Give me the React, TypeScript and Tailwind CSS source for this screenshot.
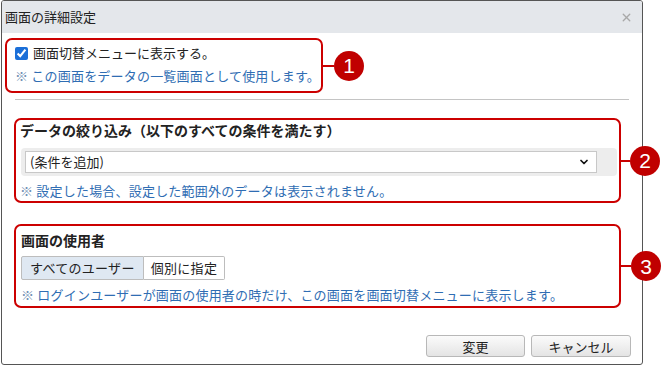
import React from 'react';
import { ChevronDown, X } from 'lucide-react';

const Marker: React.FC<{ n: number; line: number }> = ({ n, line }) => (
  <div className="absolute left-full top-1/2 -translate-y-1/2 flex items-center z-10">
    <div className="h-[2px] bg-[#c80000]" style={{ width: line }} />
    <div className="w-[30px] h-[30px] rounded-full bg-[#c00000] flex items-center justify-center text-white text-[21px] leading-none font-['Liberation_Sans',sans-serif]">
      {n}
    </div>
  </div>
);

const Note: React.FC<{ children: React.ReactNode }> = ({ children }) => (
  <p className="text-[13px] leading-[18px] tracking-[0.2px] text-[#2f6db3] whitespace-nowrap">
    <span className="text-[#6f8fb3]">※</span> {children}
  </p>
);

export default function App() {
  return (
    <div className="w-[670px] h-[367px] bg-white font-['Noto_Sans_CJK_JP',sans-serif] text-[#222]">
      <div className="ml-[1px] w-[642px] h-[365px] border border-[#555] rounded-[3px] bg-white flex flex-col">
        {/* title bar */}
        <div className="h-[32px] bg-[#e4e7eb] flex items-center justify-between pl-[3px] pr-[9px] rounded-t-[2px]">
          <span className="text-[13px] leading-[18px]">画面の詳細設定</span>
          <X size={13} strokeWidth={2.5} className="text-[#a8a8a8]" />
        </div>

        {/* 1 */}
        <div className="relative ml-[3px] mt-[5px] w-[318px] h-[55px] border-2 border-[#cc0000] rounded-[7px] pl-[8px] pt-[3px]">
          <label className="flex items-center h-[20px] gap-[5px] text-[13px] whitespace-nowrap">
            <input type="checkbox" checked readOnly className="w-[13px] h-[13px] m-0 accent-[#1b6fd8]" />
            画面切替メニューに表示する。
          </label>
          <div className="mt-[4px] leading-[20px]">
            <Note>この画面をデータの一覧画面として使用します。</Note>
          </div>
          <Marker n={1} line={13} />
        </div>

        <div className="ml-[13px] mt-[6px] w-[614px] h-px bg-[#c4c4c4]" />

        {/* 2 */}
        <div className="relative ml-[12px] mt-[18px] w-[607px] h-[85px] border-2 border-[#cc0000] rounded-[7px] pl-[4px] pr-[2px] pt-[1px]">
          <h3 className="text-[14px] leading-[18px] font-bold">データの絞り込み（以下のすべての条件を満たす）</h3>
          <div className="mt-[9px] ml-[1px] h-[28px] bg-[#ededed] rounded-[4px] pl-[4px] pt-[3px]">
            <div className="w-[572px] h-[22px] bg-white border border-[#c8c8c8] flex items-center justify-between pl-[4px] pr-[6px]">
              <span className="text-[13px] leading-[18px]">(条件を追加)</span>
              <ChevronDown size={12} strokeWidth={3.5} className="text-[#111]" />
            </div>
          </div>
          <div className="mt-[6px]">
            <Note>設定した場合、設定した範囲外のデータは表示されません。</Note>
          </div>
          <Marker n={2} line={11} />
        </div>

        {/* 3 */}
        <div className="relative ml-[12px] mt-[21px] w-[607px] h-[84px] border-2 border-[#cc0000] rounded-[7px] pl-[5px] pt-[5px]">
          <h3 className="text-[14px] leading-[18px] font-bold">画面の使用者</h3>
          <div className="mt-[7px] flex">
            <div className="h-[24px] px-[8px] flex items-center text-[13px] tracking-[0.3px] bg-[#dfe8f2] border border-[#bdbdbd] rounded-l-[2px]">
              すべてのユーザー
            </div>
            <div className="h-[24px] px-[7px] flex items-center text-[13px] tracking-[0.3px] bg-white border border-l-0 border-[#bdbdbd] rounded-r-[2px]">
              個別に指定
            </div>
          </div>
          <div className="mt-[6px]">
            <Note>ログインユーザーが画面の使用者の時だけ、この画面を画面切替メニューに表示します。</Note>
          </div>
          <Marker n={3} line={12} />
        </div>

        {/* footer */}
        <div className="mt-[27px] flex justify-end gap-[6px] pr-[11px]">
          <button className="w-[99px] h-[22px] text-[13px] leading-none border border-[#b8b8b8] rounded-[3px] bg-gradient-to-b from-[#fbfbfb] to-[#e4e4e4]">
            変更
          </button>
          <button className="w-[100px] h-[22px] text-[13px] leading-none border border-[#b8b8b8] rounded-[3px] bg-gradient-to-b from-[#fbfbfb] to-[#e4e4e4]">
            キャンセル
          </button>
        </div>
      </div>
    </div>
  );
}
